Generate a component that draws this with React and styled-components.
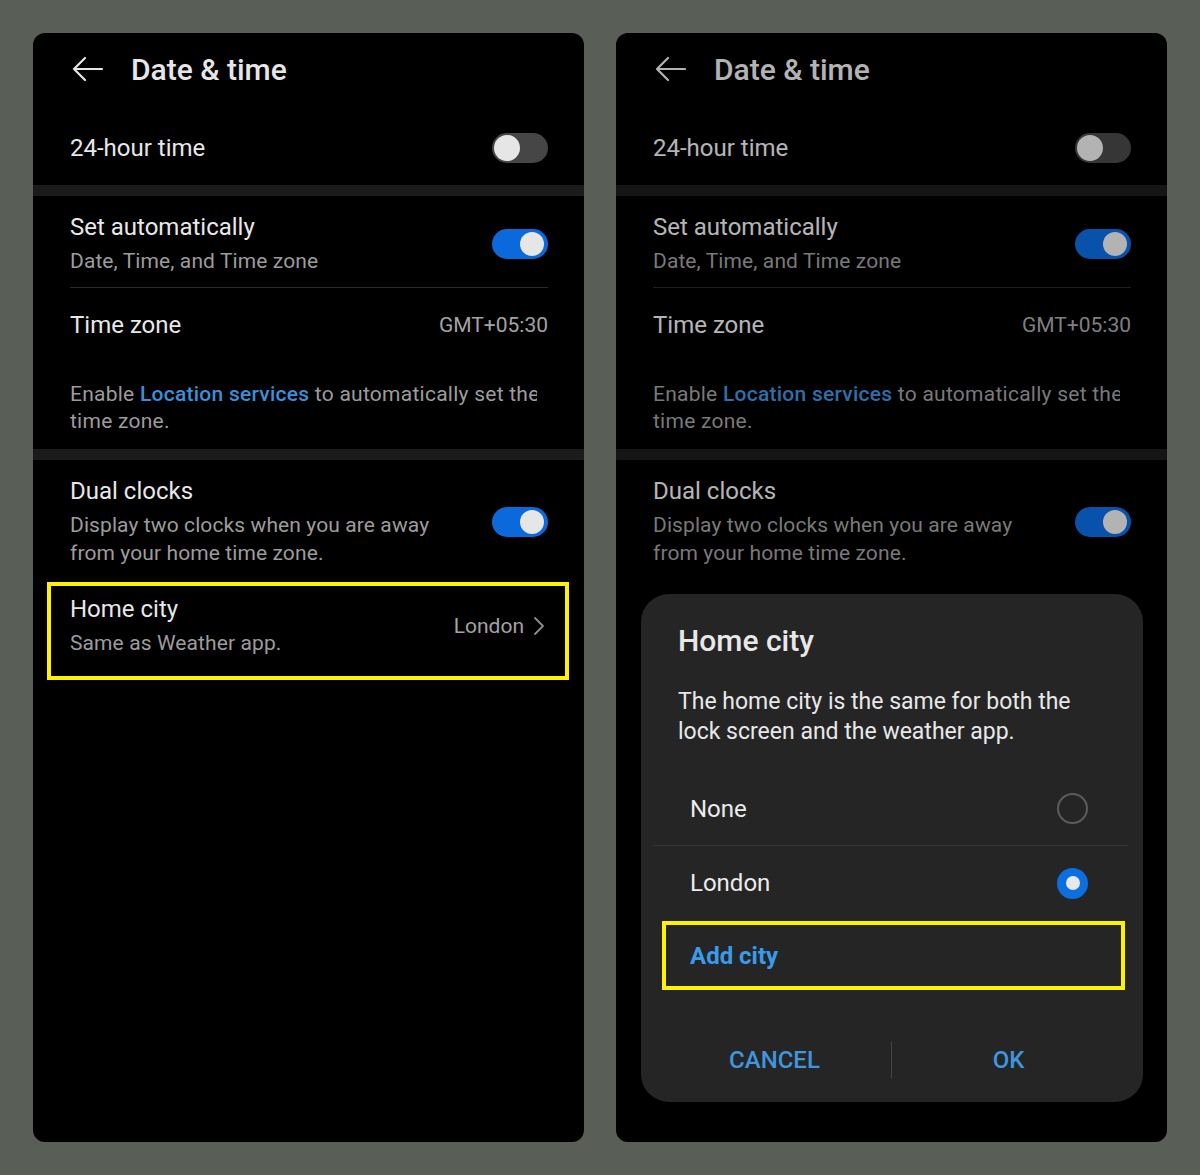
import React from "react";
import styled, { createGlobalStyle } from "styled-components";

const Global = createGlobalStyle`
  html, body { margin: 0; padding: 0; background: #595e56; }
  body { font-family: Roboto, "Noto Sans", "Liberation Sans", sans-serif; }
  * { box-sizing: border-box; }
`;

const Page = styled.div`
  width: 1200px;
  height: 1175px;
  padding: 33px;
  display: flex;
  gap: 32px;
  background: #595e56;
`;

const Panel = styled.div`
  position: relative;
  width: 551px;
  height: 1109px;
  background: #000;
  border-radius: 12px;
  overflow: hidden;
  display: flex;
  flex-direction: column;
`;

const Header = styled.div`
  height: 72px;
  display: flex;
  align-items: center;
  padding-left: 38px;
  gap: 28px;
  color: #e6e6e6;
`;

const HeaderTitle = styled.h1`
  margin: 0;
  font-size: 30px;
  font-weight: 500;
  color: #e6e6e6;
`;

const Band = styled.div`
  height: 11px;
  background: #1b1b1b;
  flex: none;
`;

const Section = styled.div`
  display: flex;
  flex-direction: column;
`;

const Row = styled.div`
  display: flex;
  align-items: center;
  justify-content: space-between;
  margin: 0 36px 0 37px;
  padding: ${(p) => p.$pad || "0"};
  min-height: ${(p) => p.$h || "auto"};
  border-bottom: ${(p) => (p.$divider ? "1px solid #2b2b2b" : "none")};
`;

const HighlightRow = styled.div`
  display: flex;
  align-items: center;
  justify-content: space-between;
  margin: 15px 15px 0 14px;
  padding: 8px 20px 18px 19px;
  border: 4px solid #fff200;
`;

const TextCol = styled.div`
  display: flex;
  flex-direction: column;
  gap: ${(p) => p.$gap || "4px"};
`;

const Title = styled.div`
  font-size: 24px;
  line-height: 30px;
  color: #e8e8e8;
`;

const Sub = styled.div`
  font-size: 21px;
  line-height: ${(p) => p.$lh || "30px"};
  color: #9c9c9c;
  letter-spacing: 0.1px;
`;

const Value = styled.div`
  font-size: 21px;
  color: #a3a3a3;
  display: flex;
  align-items: center;
  gap: 9px;
`;

const Note = styled.div`
  margin: 19px 0 14px 37px;
  width: 467px;
  font-size: 21px;
  line-height: 27px;
  color: #9c9c9c;
  white-space: nowrap;
  overflow: hidden;
  letter-spacing: 0.25px;
`;

const Link = styled.span`
  color: #3b8fdc;
  font-weight: 500;
`;

const Track = styled.div`
  flex: none;
  width: 56px;
  height: 30px;
  border-radius: 15px;
  background: ${(p) => (p.$on ? "#0b69dc" : "#464646")};
  display: flex;
  align-items: center;
  justify-content: ${(p) => (p.$on ? "flex-end" : "flex-start")};
  padding: 0 3px;
`;

const Thumb = styled.div`
  width: ${(p) => (p.$on ? "24px" : "26px")};
  height: ${(p) => (p.$on ? "24px" : "26px")};
  border-radius: 50%;
  background: #e6e6e6;
  margin: 0 ${(p) => (p.$on ? "1px" : "-1px")};
`;

const Dim = styled.div`
  position: absolute;
  inset: 0;
  background: rgba(0, 0, 0, 0.22);
  pointer-events: none;
`;

const Dialog = styled.div`
  position: absolute;
  left: 25px;
  right: 24px;
  bottom: 40px;
  height: 508px;
  background: #252525;
  border-radius: 28px;
  display: flex;
  flex-direction: column;
  padding: 30px 0 6px;
`;

const DialogTitle = styled.h2`
  margin: 0 0 29px 37px;
  font-size: 30px;
  line-height: 34px;
  font-weight: 500;
  color: #e8e8e8;
`;

const DialogBody = styled.p`
  margin: 0 20px 25px 37px;
  font-size: 23px;
  line-height: 30px;
  color: #e8e8e8;
`;

const OptionList = styled.div`
  margin: 0 15px 0 12px;
  display: flex;
  flex-direction: column;
`;

const Option = styled.div`
  height: 74px;
  display: flex;
  align-items: center;
  justify-content: space-between;
  padding: 0 40px 0 37px;
  font-size: 24px;
  color: #ececec;
  border-bottom: ${(p) => (p.$divider ? "1px solid #353535" : "none")};
`;

const Radio = styled.div`
  width: 31px;
  height: 31px;
  border-radius: 50%;
  border: ${(p) => (p.$on ? "none" : "2px solid #5c5c5c")};
  background: ${(p) => (p.$on ? "#0b6fe0" : "transparent")};
  display: flex;
  align-items: center;
  justify-content: center;
  &::after {
    content: "";
    display: ${(p) => (p.$on ? "block" : "none")};
    width: 14px;
    height: 14px;
    border-radius: 50%;
    background: #e8e8e8;
  }
`;

const AddCity = styled.div`
  margin: 1px 18px 0 21px;
  height: 69px;
  border: 4px solid #fff200;
  display: flex;
  align-items: center;
  padding-left: 24px;
  font-size: 24px;
  font-weight: 700;
  color: #3a9be8;
`;

const Buttons = styled.div`
  margin-top: auto;
  height: 72px;
  display: grid;
  grid-template-columns: 1fr 1px 1fr;
  align-items: center;
  padding: 0 18px 0 17px;
`;

const DialogButton = styled.div`
  text-align: center;
  font-size: 24px;
  font-weight: 500;
  color: #3f95de;
`;

const VDivider = styled.div`
  height: 36px;
  background: #444;
`;

const BackArrow = () => (
  <svg width="32" height="26" viewBox="0 0 32 26" fill="none">
    <path
      d="M31 13H3M14 2L3 13l11 11"
      stroke="currentColor"
      strokeWidth="2.2"
      strokeLinecap="round"
      strokeLinejoin="round"
    />
  </svg>
);

const Chevron = () => (
  <svg width="12" height="20" viewBox="0 0 12 20" fill="none">
    <path d="M2 2l8 8-8 8" stroke="#8c8c8c" strokeWidth="1.8" strokeLinecap="round" strokeLinejoin="round" />
  </svg>
);

const Toggle = ({ on }) => (
  <Track $on={on}>
    <Thumb $on={on} />
  </Track>
);

const Settings = ({ showHomeCity }) => (
  <>
    <Header>
      <BackArrow />
      <HeaderTitle>Date &amp; time</HeaderTitle>
    </Header>
    <Row $h="80px" $pad="6px 0 0">
      <Title>24-hour time</Title>
      <Toggle on={false} />
    </Row>
    <Band />
    <Section>
      <Row $pad="16px 0 11px" $divider>
        <TextCol>
          <Title>Set automatically</Title>
          <Sub>Date, Time, and Time zone</Sub>
        </TextCol>
        <Toggle on />
      </Row>
      <Row $h="74px">
        <Title>Time zone</Title>
        <Value>GMT+05:30</Value>
      </Row>
      <Note>
        Enable <Link>Location services</Link> to automatically set the
        <br />
        time zone.
      </Note>
    </Section>
    <Band />
    <Section>
      <Row $pad="16px 0 0">
        <TextCol $gap="5px">
          <Title>Dual clocks</Title>
          <Sub $lh="28px">
            Display two clocks when you are away
            <br />
            from your home time zone.
          </Sub>
        </TextCol>
        <Toggle on />
      </Row>
      {showHomeCity && (
        <HighlightRow>
          <TextCol>
            <Title>Home city</Title>
            <Sub>Same as Weather app.</Sub>
          </TextCol>
          <Value>
            London
            <Chevron />
          </Value>
        </HighlightRow>
      )}
    </Section>
  </>
);

export default function App() {
  return (
    <>
      <Global />
      <Page>
        <Panel>
          <Settings showHomeCity />
        </Panel>
        <Panel>
          <Settings showHomeCity={false} />
          <Dim />
          <Dialog>
            <DialogTitle>Home city</DialogTitle>
            <DialogBody>
              The home city is the same for both the
              <br />
              lock screen and the weather app.
            </DialogBody>
            <OptionList>
              <Option $divider>
                None
                <Radio />
              </Option>
              <Option>
                London
                <Radio $on />
              </Option>
            </OptionList>
            <AddCity>Add city</AddCity>
            <Buttons>
              <DialogButton>CANCEL</DialogButton>
              <VDivider />
              <DialogButton>OK</DialogButton>
            </Buttons>
          </Dialog>
        </Panel>
      </Page>
    </>
  );
}
